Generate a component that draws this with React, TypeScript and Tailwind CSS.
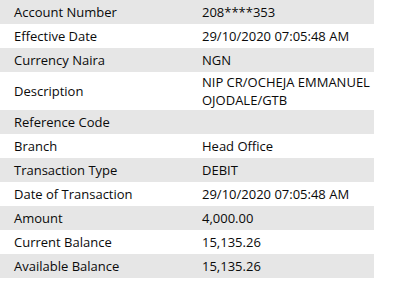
import React from "react";

const rows: { label: string; value: React.ReactNode; tall?: boolean }[] = [
  { label: "Account Number", value: "208****353" },
  { label: "Effective Date", value: "29/10/2020 07:05:48 AM" },
  { label: "Currency Naira", value: "NGN" },
  {
    label: "Description",
    value: (
      <>
        NIP CR/OCHEJA EMMANUEL
        <br />
        OJODALE/GTB
      </>
    ),
    tall: true,
  },
  { label: "Reference Code", value: "" },
  { label: "Branch", value: "Head Office" },
  { label: "Transaction Type", value: "DEBIT" },
  { label: "Date of Transaction", value: "29/10/2020 07:05:48 AM" },
  { label: "Amount", value: "4,000.00" },
  { label: "Current Balance", value: "15,135.26" },
  { label: "Available Balance", value: "15,135.26" },
];

export default function App() {
  return (
    <div
      className="w-[402px] h-[292px] bg-white text-[13px] text-[#0a0a0a]"
      style={{ fontFamily: '"Open Sans", "Noto Sans", sans-serif' }}
    >
      <div className="w-[374px] flex flex-col">
        {rows.map((r, i) => (
          <div
            key={i}
            className={`flex items-center ${r.tall ? "h-[38px]" : "h-[24px]"} ${
              i % 2 === 0 ? "bg-[#e6e6e6]" : "bg-white"
            }`}
          >
            <div className="w-[202px] pl-[14px] leading-[17px]">{r.label}</div>
            <div className="flex-1 leading-[18px]">{r.value}</div>
          </div>
        ))}
      </div>
    </div>
  );
}
